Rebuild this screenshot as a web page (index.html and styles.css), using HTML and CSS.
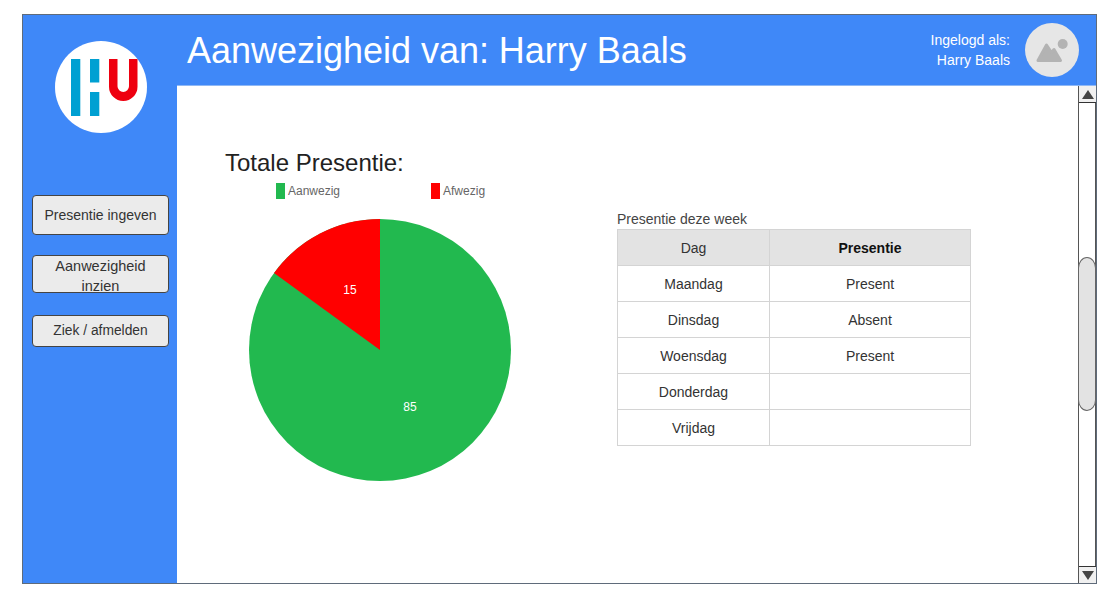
FILE: index.html
```html
<!DOCTYPE html>
<html lang="nl">
<head>
<meta charset="utf-8">
<title>Aanwezigheid</title>
<link rel="stylesheet" href="styles.css">
</head>
<body>
<div class="app">
  <aside class="sidebar">
    <div class="logo">
      <svg viewBox="0 0 92 92" width="92" height="92">
        <circle cx="46" cy="46" r="46" fill="#fff"/>
        <rect x="16" y="18" width="9.300" height="57" fill="#00a0d2"/>
        <rect x="35" y="18" width="9.300" height="23.500" fill="#00a0d2"/>
        <rect x="35" y="51" width="9.300" height="24" fill="#00a0d2"/>
        <path d="M54 18h8.500v27.250a5.750 5.750 0 0 0 11.500 0V18h8.500v27.750a14.250 14.250 0 0 1-28.500 0z" fill="#ee0010"/>
      </svg>
    </div>
    <nav class="nav">
      <button class="btn btn-a">Presentie ingeven</button>
      <button class="btn btn-b">Aanwezigheid inzien</button>
      <button class="btn btn-c">Ziek / afmelden</button>
    </nav>
  </aside>
  <div class="main">
    <header class="header">
      <h1 class="title">Aanwezigheid van: Harry Baals</h1>
      <div class="user">
        <div class="user-text">Ingelogd als:<br>Harry Baals</div>
        <div class="avatar">
          <svg viewBox="0 0 54 54" width="54" height="54">
            <circle cx="27" cy="27" r="27" fill="#e6e6e6"/>
            <circle cx="37.700" cy="21" r="5" fill="#b3b3b3"/>
            <path d="M13 37.500L21.500 22L26.500 29.500L29 26.500L35.500 37.500z" fill="#b3b3b3" stroke="#b3b3b3" stroke-width="3" stroke-linejoin="round"/>
          </svg>
        </div>
      </div>
    </header>
    <div class="body">
      <section class="content">
        <div class="chart-col">
          <h2 class="chart-title">Totale Presentie:</h2>
          <div class="legend">
            <span class="legend-item"><i class="swatch swatch-green"></i>Aanwezig</span>
            <span class="legend-item"><i class="swatch swatch-red"></i>Afwezig</span>
          </div>
          <svg class="pie" viewBox="0 0 262 262" width="262" height="262">
            <circle cx="131" cy="131" r="131" fill="#22b94f"/>
            <path d="M131 131L25 54A131 131 0 0 1 131 0z" fill="#ff0000"/>
            <text x="101" y="75" class="pie-label">15</text>
            <text x="161" y="192" class="pie-label">85</text>
          </svg>
        </div>
        <div class="table-col">
          <div class="caption">Presentie deze week</div>
          <table class="week">
            <thead>
              <tr><th class="day-head">Dag</th><th>Presentie</th></tr>
            </thead>
            <tbody>
              <tr><td>Maandag</td><td>Present</td></tr>
              <tr><td>Dinsdag</td><td>Absent</td></tr>
              <tr><td>Woensdag</td><td>Present</td></tr>
              <tr><td>Donderdag</td><td></td></tr>
              <tr><td>Vrijdag</td><td></td></tr>
            </tbody>
          </table>
        </div>
      </section>
      <div class="scrollbar">
        <div class="arrow arrow-up"><i class="tri tri-up"></i></div>
        <div class="track"><div class="thumb"></div></div>
        <div class="arrow arrow-down"><i class="tri tri-down"></i></div>
      </div>
    </div>
  </div>
</div>
</body>
</html>
```
FILE: styles.css
```css
* { box-sizing: border-box; }
html, body { margin: 0; padding: 0; height: 100%; background: #fff; overflow: hidden; }
body {
  padding: 14px 13px 23px 22px;
  font-family: "Liberation Sans", Arial, sans-serif;
  color: #333;
}
.app {
  display: flex;
  width: 1075px;
  height: 570px;
  border: 1px solid #5f6b7a;
  background: #3f88f8;
}
.sidebar {
  width: 154px;
  flex: none;
  padding: 26px 0 0 9px;
}
.logo { width: 92px; height: 92px; margin-left: 23px; }
.logo svg { display: block; }
.nav {
  display: flex;
  flex-direction: column;
  gap: 20px;
  margin-top: 62px;
  align-items: flex-start;
}
.btn {
  display: block;
  width: 137px;
  padding: 0 8px;
  border: 1px solid #444;
  border-radius: 4px;
  background: #ebebeb;
  color: #333;
  font: 14px/20px "Liberation Sans", Arial, sans-serif;
  text-align: center;
}
.btn-a { height: 40px; }
.btn-b { height: 38px; padding: 0 10px 4px; font-size: 14.500px; }
.btn-c { height: 32px; margin-top: 2px; font-size: 13.800px; }
.main { flex: 1; display: flex; flex-direction: column; min-width: 0; }
.header {
  height: 71px;
  flex: none;
  display: flex;
  align-items: center;
  justify-content: space-between;
  padding: 0 17px 1px 10px;
  border-bottom: 1px solid #8fb8f5;
}
.title {
  margin: 0;
  padding-top: 3px;
  font-size: 36px;
  font-weight: 400;
  color: #fff;
  line-height: 70px;
  letter-spacing: -0.02px;
}
.user { display: flex; align-items: center; gap: 15px; }
.user-text {
  color: #fff;
  font-size: 14px;
  line-height: 20px;
  text-align: right;
}
.avatar { width: 54px; height: 54px; }
.avatar svg { display: block; }
.body { flex: 1; display: flex; background: #fff; min-height: 0; }
.content {
  flex: 1;
  display: flex;
  align-items: flex-start;
  padding: 63px 0 0 48px;
}
.chart-col { width: 392px; flex: none; }
.chart-title {
  margin: 0;
  font-size: 24px;
  font-weight: 400;
  line-height: 28px;
  color: #222;
}
.legend {
  display: flex;
  height: 16px;
  margin: 6px 0 0 51px;
  gap: 91px;
  font-size: 12px;
  color: #666;
}
.legend-item { display: flex; align-items: center; line-height: 16px; }
.swatch { display: block; width: 9px; height: 16px; margin-right: 3px; }
.swatch-green { background: #22b94f; }
.swatch-red { background: #ff0000; }
.pie { display: block; margin: 20px 0 0 24px; }
.pie-label { fill: #fff; font-size: 12px; text-anchor: middle; font-family: "Liberation Sans", Arial, sans-serif; }
.table-col { padding-top: 62px; }
.caption { font-size: 14px; line-height: 16px; height: 18px; color: #444; }
.week {
  border-collapse: collapse;
  width: 354px;
  table-layout: fixed;
  font-size: 14px;
  color: #333;
}
.week th, .week td {
  height: 36px;
  padding: 0;
  text-align: center;
  border: 1px solid #d4d4d4;
}
.week th { background: #e3e3e3; color: #111; font-weight: 700; }
.week th.day-head { font-weight: 400; color: #333; width: 152px; }
.scrollbar {
  width: 18px;
  flex: none;
  display: flex;
  flex-direction: column;
  border-left: 1px solid #555;
}
.arrow {
  height: 17px;
  flex: none;
  display: flex;
  align-items: center;
  justify-content: center;
  background: #f0f0f0;
}
.arrow-up { border-bottom: 1px solid #333; }
.arrow-down { border-top: 1px solid #333; }
.tri { display: block; width: 0; height: 0; border-left: 6px solid transparent; border-right: 6px solid transparent; }
.tri-up { border-bottom: 9px solid #444; }
.tri-down { border-top: 9px solid #444; }
.track { flex: 1; padding-top: 154px; border-right: 1px solid #555; }
.thumb {
  height: 154px;
  background: #e3e3e3;
  border: 1px solid #666;
  border-radius: 9px / 11px;
  margin: 0 -1px;
}
```
